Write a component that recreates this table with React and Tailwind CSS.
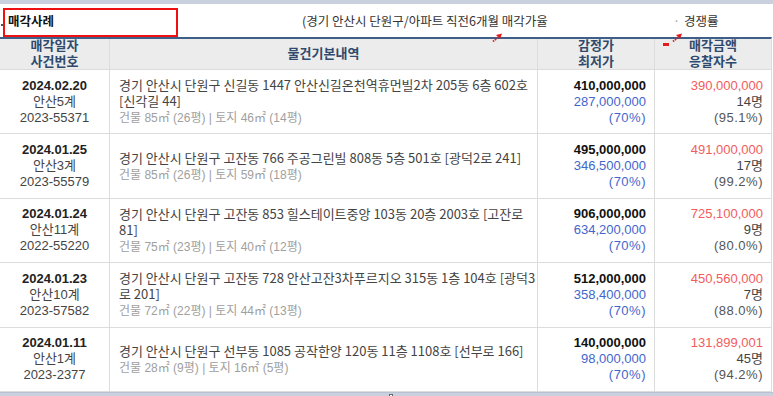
const rows = [
  {
    date: "2024.02.20",
    court: "안산5계",
    no: "2023-55371",
    addr: "경기 안산시 단원구 신길동 1447 안산신길온천역휴먼빌2차 205동 6층 602호 [신각길 44]",
    area: "건물 85㎡ (26평) | 토지 46㎡ (14평)",
    appraisal: "410,000,000",
    minimum: "287,000,000",
    rate: "(70%)",
    sold: "390,000,000",
    bidders: "14명",
    ratio: "(95.1%)",
  },
  {
    date: "2024.01.25",
    court: "안산3계",
    no: "2023-55579",
    addr: "경기 안산시 단원구 고잔동 766 주공그린빌 808동 5층 501호 [광덕2로 241]",
    area: "건물 85㎡ (26평) | 토지 59㎡ (18평)",
    appraisal: "495,000,000",
    minimum: "346,500,000",
    rate: "(70%)",
    sold: "491,000,000",
    bidders: "17명",
    ratio: "(99.2%)",
  },
  {
    date: "2024.01.24",
    court: "안산11계",
    no: "2022-55220",
    addr: "경기 안산시 단원구 고잔동 853 힐스테이트중앙 103동 20층 2003호 [고잔로 81]",
    area: "건물 75㎡ (23평) | 토지 40㎡ (12평)",
    appraisal: "906,000,000",
    minimum: "634,200,000",
    rate: "(70%)",
    sold: "725,100,000",
    bidders: "9명",
    ratio: "(80.0%)",
  },
  {
    date: "2024.01.23",
    court: "안산10계",
    no: "2023-57582",
    addr: "경기 안산시 단원구 고잔동 728 안산고잔3차푸르지오 315동 1층 104호 [광덕3로 201]",
    area: "건물 72㎡ (22평) | 토지 44㎡ (13평)",
    appraisal: "512,000,000",
    minimum: "358,400,000",
    rate: "(70%)",
    sold: "450,560,000",
    bidders: "7명",
    ratio: "(88.0%)",
  },
  {
    date: "2024.01.11",
    court: "안산1계",
    no: "2023-2377",
    addr: "경기 안산시 단원구 선부동 1085 공작한양 120동 11층 1108호 [선부로 166]",
    area: "건물 28㎡ (9평) | 토지 16㎡ (5평)",
    appraisal: "140,000,000",
    minimum: "98,000,000",
    rate: "(70%)",
    sold: "131,899,001",
    bidders: "45명",
    ratio: "(94.2%)",
  },
];

const cjk = { fontFamily: '"Noto Sans CJK KR", "Noto Sans", sans-serif' };

// little red pen marks drawn over the screenshot
function RedArrow({ className }) {
  return (
    <svg className={className} width="11" height="9" viewBox="0 0 11 9">
      <path d="M1 8.5 L6 4.5" stroke="#e31b1b" strokeWidth="1.8" strokeDasharray="1.5 1" />
      <path d="M4 2 L10 0.5 L8 6 Z" fill="#e31b1b" />
    </svg>
  );
}

export default function App() {
  return (
    <div
      className="w-[773px] h-[396px] overflow-hidden bg-white text-[13px] leading-[16px] text-[#333] flex flex-col"
      style={{ fontFamily: '"Liberation Sans", "Noto Sans CJK KR", sans-serif' }}
    >
      {/* top strip */}
      <div className="h-[4px] bg-[#c9d1df] shrink-0" />

      {/* title line */}
      <div className="relative h-[33px] shrink-0 flex items-center text-[12.5px]" style={cjk}>
        <div className="absolute left-[1px] top-[20px] w-[2px] h-[2px] bg-[#555]" />
        <div className="absolute left-[3px] top-[4px] w-[175px] h-[29px] border-2 border-[#ee1111]" />
        <div className="w-[302px] flex items-center pl-[8px]">
          <span className="font-bold text-[#111]">매각사례</span>
        </div>
        <div className="w-[371px] text-[#333]">(경기 안산시 단원구/아파트 직전6개월 매각가율</div>
        <span className="text-[#aaa]">·</span>
        <span className="ml-[4px] text-[#333]">경쟁률</span>
        <RedArrow className="absolute left-[492px] top-[29px] z-10" />
        <RedArrow className="absolute left-[672px] top-[29px] z-10" />
        <div className="absolute left-[663px] top-[39px] w-[6px] h-[3px] bg-[#e31b1b] z-10" />
      </div>

      {/* table */}
      <div className="w-[772px] border-t-2 border-[#3d5f88] border-r border-r-[#dcdcdc] shrink-0">
        <div className="flex h-[31px] bg-[#ececec] font-bold text-[#2f4a6d] border-b border-[#dcdcdc]">
          <div className="w-[110px] border-r border-[#dcdcdc] flex flex-col items-center justify-center">
            <span>매각일자</span>
            <span>사건번호</span>
          </div>
          <div className="w-[428px] border-r border-[#dcdcdc] flex items-center justify-center">
            물건기본내역
          </div>
          <div className="w-[117px] border-r border-[#dcdcdc] flex flex-col items-center justify-center">
            <span>감정가</span>
            <span>최저가</span>
          </div>
          <div className="flex-1 flex flex-col items-center justify-center">
            <span>매각금액</span>
            <span>응찰자수</span>
          </div>
        </div>

        {rows.map((r) => (
          <div key={r.no} className="flex h-[64.4px] border-b border-[#dcdcdc]">
            <div className="w-[110px] border-r border-[#dcdcdc] flex flex-col items-center justify-center">
              <span className="font-bold text-[#222]">{r.date}</span>
              <span className="text-[#444]">{r.court}</span>
              <span className="text-[#444]">{r.no}</span>
            </div>
            <div className="w-[428px] border-r border-[#dcdcdc] flex flex-col justify-center pl-[9px] pr-[1px]">
              <span className="text-[#444]" style={cjk}>{r.addr}</span>
              <span className="text-[12px] mt-[1px] text-[#a0a0a0]">{r.area}</span>
            </div>
            <div className="w-[117px] border-r border-[#dcdcdc] flex flex-col items-end justify-center pr-[8px]">
              <span className="font-bold text-[#111]">{r.appraisal}</span>
              <span className="text-[#3f66cc]">{r.minimum}</span>
              <span className="text-[#3f66cc] tracking-[0.5px]">{r.rate}</span>
            </div>
            <div className="flex-1 flex flex-col items-end justify-center pr-[8px]">
              <span className="text-[#f25c5c]">{r.sold}</span>
              <span className="text-[#444]">{r.bidders}</span>
              <span className="text-[#555] tracking-[0.5px]">{r.ratio}</span>
            </div>
          </div>
        ))}
      </div>

      {/* bottom strip */}
      <div className="relative flex-1 bg-[#c9d1df] border-t border-[#b8c2d2]">
        <div className="absolute left-[389px] top-[1px] w-[4px] h-[3px] border border-[#666] bg-white" />
      </div>
    </div>
  );
}
